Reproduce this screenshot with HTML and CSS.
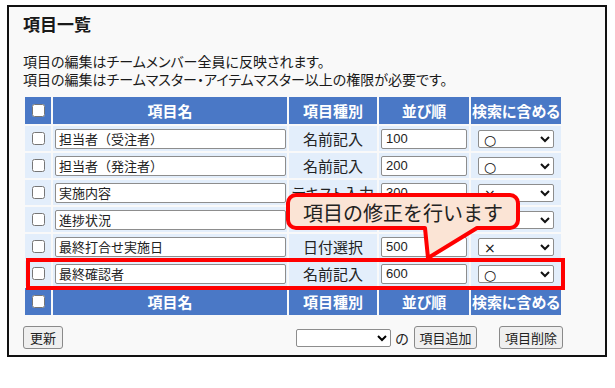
FILE: index.html
```html
<!DOCTYPE html>
<html lang="ja">
  <head>
    <meta charset="UTF-8" />
    <title>項目一覧</title>
    <link rel="stylesheet" href="styles.css">
  </head>
  <body>
    <div class="panel">
      <h1 class="title">項目一覧</h1>
      <p class="desc">
        項目の編集はチームメンバー全員に反映されます。<br>
        項目の編集はチームマスター・アイテムマスター以上の権限が必要です。
      </p>
      <table class="items">
        <colgroup>
          <col class="c-check">
          <col class="c-name">
          <col class="c-type">
          <col class="c-order">
          <col class="c-search">
        </colgroup>
        <thead>
          <tr>
            <th><input type="checkbox"></th>
            <th>項目名</th>
            <th>項目種別</th>
            <th>並び順</th>
            <th>検索に含める</th>
          </tr>
        </thead>
        <tbody>
          <tr>
            <td class="chk"><input type="checkbox"></td>
            <td class="name"><input type="text" value="担当者（受注者）"></td>
            <td class="type">名前記入</td>
            <td class="order"><input type="text" value="100"></td>
            <td class="search"><select><option>○</option><option>×</option></select></td>
          </tr>
          <tr>
            <td class="chk"><input type="checkbox"></td>
            <td class="name"><input type="text" value="担当者（発注者）"></td>
            <td class="type">名前記入</td>
            <td class="order"><input type="text" value="200"></td>
            <td class="search"><select><option>○</option><option>×</option></select></td>
          </tr>
          <tr>
            <td class="chk"><input type="checkbox"></td>
            <td class="name"><input type="text" value="実施内容"></td>
            <td class="type">テキスト入力</td>
            <td class="order"><input type="text" value="300"></td>
            <td class="search"><select><option>×</option><option>○</option></select></td>
          </tr>
          <tr>
            <td class="chk"><input type="checkbox"></td>
            <td class="name"><input type="text" value="進捗状況"></td>
            <td class="type">選択入力</td>
            <td class="order"><input type="text" value="400"></td>
            <td class="search"><select><option>○</option><option>×</option></select></td>
          </tr>
          <tr>
            <td class="chk"><input type="checkbox"></td>
            <td class="name"><input type="text" value="最終打合せ実施日"></td>
            <td class="type">日付選択</td>
            <td class="order"><input type="text" value="500"></td>
            <td class="search"><select><option>×</option><option>○</option></select></td>
          </tr>
          <tr>
            <td class="chk"><input type="checkbox"></td>
            <td class="name"><input type="text" value="最終確認者"></td>
            <td class="type">名前記入</td>
            <td class="order"><input type="text" value="600"></td>
            <td class="search"><select><option>○</option><option>×</option></select></td>
          </tr>
        </tbody>
        <tfoot>
          <tr>
            <th><input type="checkbox"></th>
            <th>項目名</th>
            <th>項目種別</th>
            <th>並び順</th>
            <th>検索に含める</th>
          </tr>
        </tfoot>
      </table>
      <div class="controls">
        <button class="btn btn-update">更新</button>
        <div class="add-group">
          <select class="kind"><option></option></select>
          <span class="no">の</span>
          <button class="btn btn-add">項目追加</button>
          <button class="btn btn-delete">項目削除</button>
        </div>
      </div>
    </div>

    <!-- annotations drawn over the screenshot -->
    <div class="highlight"></div>
    <div class="callout">
      <svg width="244" height="74" viewBox="0 0 244 74">
        <path d="M14 6 H228 A8 8 0 0 1 236 14 V31 A8 8 0 0 1 228 39 H195 L146 69 L143 39 H14 A8 8 0 0 1 6 31 V14 A8 8 0 0 1 14 6 Z"
              fill="#fbe4d5" stroke="#ff0000" stroke-width="4" stroke-linejoin="round" />
      </svg>
      <span class="callout-text">項目の修正を行います</span>
    </div>
  </body>
</html>
```

FILE: styles.css
```css
* {
  margin: 0;
  padding: 0;
  box-sizing: border-box;
}
body {
  position: relative;
  background: #fff;
  font-family: "Noto Sans CJK JP", "Noto Sans", sans-serif;
  color: #222;
  width: 615px;
  height: 388px;
  overflow: hidden;
}
.panel {
  margin: 5px 0 0 7px;
  width: 600px;
  height: 352px;
  border: 2px solid #111;
  background-color: #f9f9f9;
  padding: 5px 14px 0 14px;
}
.title {
  font-size: 17px;
  font-weight: bold;
  line-height: 24px;
  color: #1a1a1a;
}
.desc {
  margin-top: 16px;
  font-size: 14px;
  line-height: 18px;
  color: #1a1a1a;
  font-feature-settings: "palt";
  white-space: nowrap;
}
.items {
  margin-top: 7px;
  border-collapse: separate;
  border-spacing: 2px;
  table-layout: fixed;
  width: 540px;
}
.c-check { width: 26px; }
.c-name { width: 234px; }
.c-type { width: 88px; }
.c-order { width: 90px; }
.c-search { width: 90px; }

.items th {
  height: 27px;
  background-color: #4a78c6;
  color: #fff;
  font-size: 15px;
  font-weight: bold;
  text-align: center;
  vertical-align: middle;
  white-space: nowrap;
  font-feature-settings: "palt";
}
.items td {
  height: 25px;
  background-color: #e3eefb;
  vertical-align: middle;
}
.items input[type="checkbox"] {
  display: block;
  margin: 0 auto;
  width: 13px;
  height: 13px;
}
.items .name {
  padding-left: 2px;
}
.items .name input {
  display: block;
  width: 231px;
  height: 20px;
  font-family: inherit;
  font-size: 13px;
  color: #222;
  padding: 0 3px;
  border: 1px solid #8d8d8d;
  border-radius: 2px;
  background: #fff;
}
.items .type {
  text-align: center;
  font-size: 15px;
  color: #222;
  white-space: nowrap;
  overflow: hidden;
  font-feature-settings: "palt";
}
.items .order {
  padding-left: 2px;
}
.items .order input {
  display: block;
  width: 86px;
  height: 20px;
  font-family: "Liberation Sans", sans-serif;
  font-size: 13px;
  color: #222;
  padding: 0 4px;
  border: 1px solid #8d8d8d;
  border-radius: 2px;
  background: #fff;
}
.items .search select {
  display: block;
  margin: 0 auto;
  width: 76px;
  height: 18px;
  font-family: "DejaVu Sans", sans-serif;
  font-size: 14px;
  color: #111;
  border: 1px solid #8d8d8d;
  border-radius: 2px;
  background: #fff;
  padding: 0 1px;
}
.controls {
  margin-top: 9px;
  width: 540px;
  display: flex;
  align-items: center;
}
.add-group {
  margin-left: auto;
  display: flex;
  align-items: center;
}
.btn {
  height: 23px;
  padding: 0;
  font-family: inherit;
  font-size: 13px;
  color: #222;
  background-color: #efefef;
  border: 1px solid #8a8a8a;
  border-radius: 3px;
}
.btn-update {
  width: 40px;
}
.btn-add {
  width: 63px;
}
.btn-delete {
  width: 64px;
  margin-left: 22px;
}
.kind {
  width: 95px;
  height: 18px;
  font-family: inherit;
  font-size: 12px;
  border: 1px solid #8d8d8d;
  border-radius: 2px;
  background: #fff;
}
.no {
  font-size: 14px;
  margin: 0 5px 0 4px;
}
.highlight {
  position: absolute;
  left: 26px;
  top: 258px;
  width: 539px;
  height: 32px;
  border: 4px solid #ff0000;
}
.callout {
  position: absolute;
  left: 282px;
  top: 189px;
  width: 244px;
  height: 74px;
}
.callout svg {
  display: block;
}
.callout-text {
  position: absolute;
  left: 21px;
  top: 10px;
  font-size: 20px;
  line-height: 28px;
  color: #222;
  white-space: nowrap;
}
```
